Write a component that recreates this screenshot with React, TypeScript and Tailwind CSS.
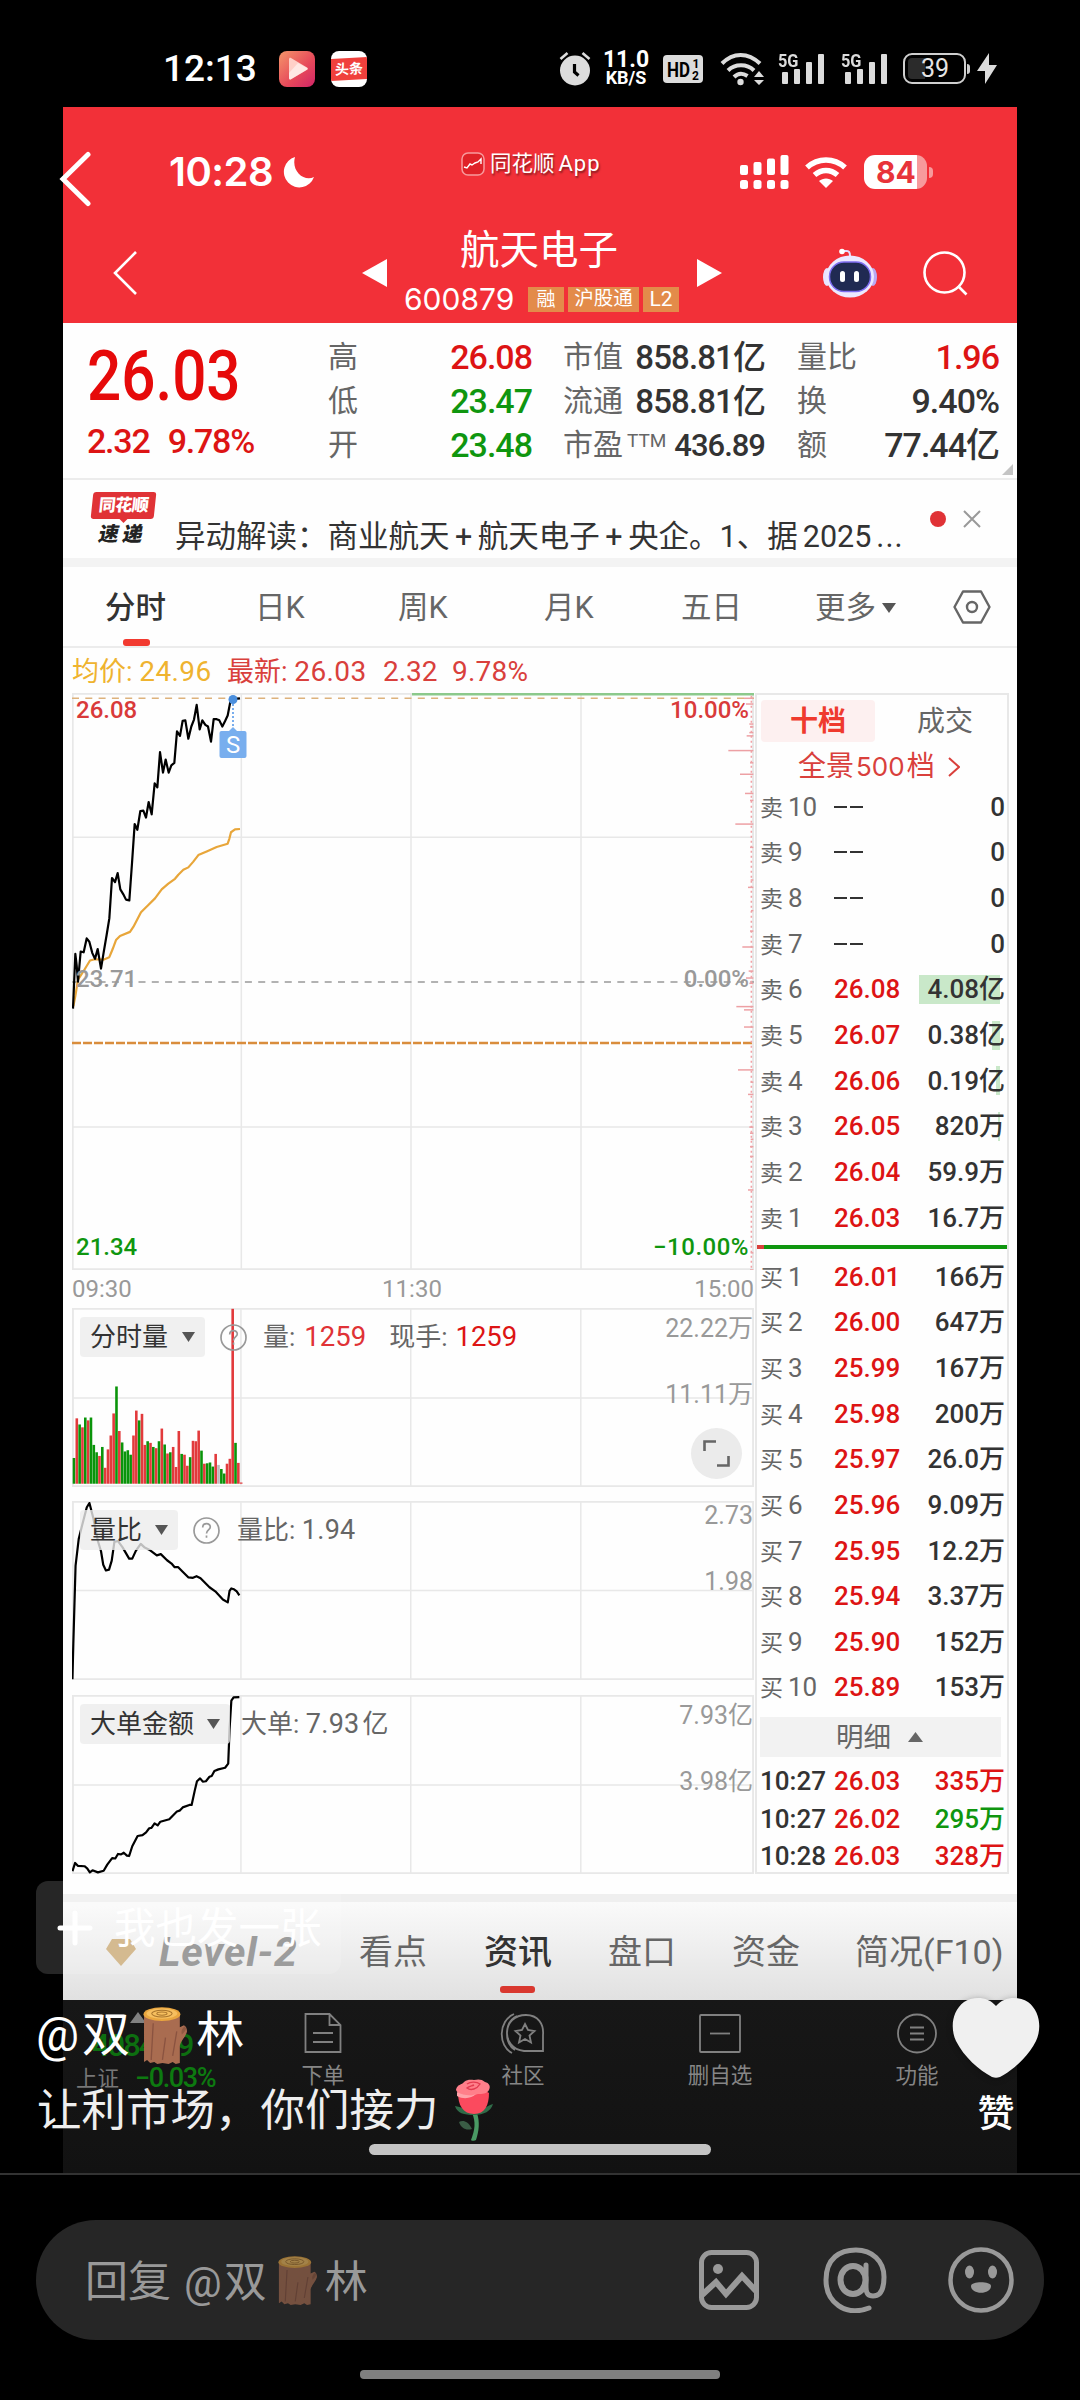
import type { ReactNode } from "react";
import clsx from "clsx";

const GRAY = "text-[#666]";
const RED = "text-[#dd1414]";
const GREEN = "text-[#0f960f]";
const DARK = "text-[#333]";

const PRICE_LINE =
  "39,806 46,672 50,700 54,740 62,666 71,668 80,634 88,642 97,670 105,684 113,660 123,708 131,668 140,625 148,585 156,486 165,496 173,474 181,514 190,526 198,539 208,541 216,450 224,354 232,368 241,322 250,321 258,338 266,300 275,330 284,254 292,264 300,178 309,228 317,196 326,228 334,210 343,204 351,127 360,138 368,101 376,100 385,145 394,115 402,98 410,62 419,122 427,100 436,111 444,115 453,152 461,97 470,97 478,100 487,115 495,102 503,88 512,50 520,48 540,46";

const AVG_LINE =
  "40,800 46,775 54,735 70,715 90,688 105,685 130,686 148,680 158,660 168,638 180,628 210,618 220,606 243,570 265,552 285,536 305,514 325,500 345,488 355,478 370,466 385,460 400,446 415,430 440,421 470,410 503,402 508,390 513,374 525,367 540,366";

const RATIO_LINE =
  "28,1028 30,940 35,750 42,685 50,650 60,608 66,597 75,635 85,690 92,715 97,748 103,762 110,760 116,738 122,692 130,690 140,705 155,733 162,733 170,714 181,697 190,706 200,711 217,725 226,722 240,737 250,745 257,754 265,754 275,765 288,779 298,780 306,776 315,781 335,803 348,813 365,833 376,840 380,812 384,806 390,808 396,813 402,823";

const BIG_ORDER_LINE =
  "28,1497 34,1477 40,1484 55,1485 61,1490 67,1500 73,1495 85,1500 98,1496 106,1481 117,1465 124,1466 130,1455 137,1456 143,1452 150,1459 155,1460 162,1436 174,1411 185,1409 193,1402 200,1392 205,1391 212,1380 219,1385 225,1376 245,1370 262,1351 268,1349 275,1341 290,1335 295,1335 302,1300 307,1277 314,1270 320,1278 327,1277 335,1266 340,1264 346,1252 355,1248 370,1244 377,1234 380,1150 384,1080 389,1072 402,1071";

// one entry per minute: colour + top of the bar
const VOLUME =
  "g485 r388 g403 r410 g386 r393 g386 g453 g471 r480 g458 r509 r464 r430 r376 g310 r419 g447 g469 g466 g477 r430 r369 g393 r377 r453 g444 r448 g458 r461 g444 r413 g452 r474 g471 r458 r507 r419 g475 r477 r504 g483 r443 r444 r418 g467 r499 g498 g496 g506 r475 x502 g512 g523 r499 r487 r120 g448 r497 r545".split(" ");

const BAR_COLORS: Record<string, string> = { g: "#0a940a", r: "#e23a3c", x: "#bbb" };

// [y, length] of the price distribution strokes on the right axis
const TICKS = [
  [70, 30], [84, 24], [133, 14], [140, 12], [154, 14], [162, 22], [198, 77], [228, 12], [256, 42], [303, 27],
  [320, 12], [378, 56], [435, 12], [515, 10], [533, 18], [590, 9], [640, 12], [679, 35], [738, 16], [755, 24],
  [768, 14], [825, 53], [833, 30], [875, 30], [980, 48], [1010, 10], [1040, 18], [1120, 14], [1135, 12],
  [1150, 10], [1168, 12], [1192, 12], [1274, 18], [1428, 10], [1470, 12],
];

const SELLS = [
  ["10", "--", "0"],
  ["9", "--", "0"],
  ["8", "--", "0"],
  ["7", "--", "0"],
  ["6", "26.08", "4.08亿", 81],
  ["5", "26.07", "0.38亿", 8],
  ["4", "26.06", "0.19亿", 4],
  ["3", "26.05", "820万", 2],
  ["2", "26.04", "59.9万"],
  ["1", "26.03", "16.7万"],
] as const;

const BUYS = [
  ["1", "26.01", "166万"],
  ["2", "26.00", "647万"],
  ["3", "25.99", "167万"],
  ["4", "25.98", "200万"],
  ["5", "25.97", "26.0万"],
  ["6", "25.96", "9.09万"],
  ["7", "25.95", "12.2万"],
  ["8", "25.94", "3.37万"],
  ["9", "25.90", "152万"],
  ["10", "25.89", "153万"],
] as const;

const TRADES = [
  ["10:27", "26.03", "335万", RED],
  ["10:27", "26.02", "295万", GREEN],
  ["10:28", "26.03", "328万", RED],
];

function Log({ className }: { className: string }) {
  return (
    <svg viewBox="0 0 43 56" className={className} preserveAspectRatio="none">
      <path d="M1 7v47l3-2 3 3 4-1 3 2 5-1 6 1 4-2 3 2 4-1V38c1-5 6-9 7-14 0-3-1-5-3-6l-4 2V7z" fill="#a96c50" />
      <path d="M10 16l-2 36M22 30l-3 22M29 48l4-24" stroke="#8a5340" strokeWidth="1.3" fill="none" />
      <path d="M41 19c-3 2-4 5-3 8 2-2 4-4 4-6z" fill="#8f5942" />
      <ellipse cx="18.500" cy="7" rx="18" ry="6.800" fill="#e9a63f" />
      <ellipse cx="18.500" cy="6.500" rx="15" ry="5" fill="#f6bf5f" />
      <ellipse cx="18.500" cy="6.500" rx="10" ry="3.300" fill="none" stroke="#a8742c" strokeWidth="1" />
      <ellipse cx="18.500" cy="6.500" rx="5" ry="1.600" fill="none" stroke="#a8742c" strokeWidth="1" />
    </svg>
  );
}

function Rose() {
  return (
    <svg viewBox="0 0 40 62" className="ml-[15px] h-[62px] w-[40px] shrink-0">
      <path d="M18 34c4 9 3 17-1 27 0 1 4 1 5 0 3-9 4-18 1-27z" fill="#4a9a64" />
      <path d="M18 50C14 42 9 41 5 43c2 6 7 9 13 7z" fill="#3a5c45" />
      <path d="M1 27c6 1 11 4 19 7 8-3 13-7 19-9-2 7-9 11-19 11S3 34 1 27z" fill="#2f6b48" />
      <path d="M4 14c0 12 5 21 16 21s15-9 15-21l-8-5-15 1z" fill="#fb4a5e" />
      <path d="M2 11C3 5 8 6 10 3c4-3 7-2 10-2 4-1 8-1 11 2 4 1 6 4 4 8-2 4-7 4-11 4C16 17 6 19 2 11z" fill="#ff7f8a" />
      <path d="M13 5c4-3 10-2 13 0-3 5-9 7-13 4 2-2 5-2 7-3" fill="none" stroke="#e33b50" strokeWidth="1.400" />
      <path d="M3 13c7 4 15 4 19 2-4 4-12 6-19 2z" fill="#ffa3aa" />
    </svg>
  );
}

function MobileBars() {
  return (
    <div className="relative h-[33px] w-[47px] pt-[1px]">
      <span className="block origin-left scale-x-[0.86] text-[19px] leading-[15px] font-bold text-[#dcdcdc]">5G</span>
      <svg viewBox="0 0 47 33" className="absolute inset-0 h-[33px] w-[47px]" fill="#dcdcdc">
        <rect x="4" y="20" width="6" height="12" rx="1" />
        <rect x="16" y="17" width="6" height="15" rx="1" />
        <rect x="28" y="10" width="6" height="22" rx="1" />
        <rect x="40" y="2" width="6" height="30" rx="1" />
      </svg>
    </div>
  );
}

function SystemStatusBar() {
  return (
    <div className="flex h-[107px] shrink-0 items-center pt-[30px] pl-[163px] font-medium text-white">
      <span className="w-[116px] text-[37px] leading-none">12:13</span>
      <svg viewBox="0 0 36 36" className="size-[36px]">
        <defs>
          <linearGradient id="play" x1="0" y1="0" x2="1" y2="1">
            <stop offset="0" stopColor="#f5966a" />
            <stop offset="0.600" stopColor="#e6475a" />
            <stop offset="1" stopColor="#d02568" />
          </linearGradient>
        </defs>
        <rect width="36" height="36" rx="8" fill="url(#play)" />
        <path d="M10 8.500c0-1.500 1-2 2-1.400l16 9.400c1 .7 1 1.700 0 2.300l-16 9.500c-1 .6-2 0-2-1.300z" fill="#ffd0c8" />
        <path d="M10 22l9-10 9 5c1 .7 1 1.200 0 1.800l-16 9.500c-1 .6-2 0-2-1.300z" fill="#fff" opacity=".5" />
      </svg>
      <div className="ml-[16px] flex size-[36px] items-center overflow-hidden rounded-[8px] bg-white">
        <div className="flex h-[22px] w-full -skew-y-3 items-center justify-center bg-[#f0403c] text-[14px] leading-none font-bold">头条</div>
      </div>

      <svg viewBox="0 0 32 34" className="ml-[192px] h-[34px] w-[32px]" fill="#dcdcdc">
        <circle cx="16" cy="18.500" r="15" />
        <path d="M1.500 7l7-6M30.500 7l-7-6" stroke="#dcdcdc" strokeWidth="2.600" />
        <path d="M15.500 12v8l4 3.500" stroke="#000" strokeWidth="3.200" fill="none" />
      </svg>
      <div className="ml-[12px] flex w-[46px] flex-col items-center text-white">
        <span className="text-[23px] leading-[18px] font-bold">11.0</span>
        <span className="text-[18px] leading-[18px] font-bold">KB/S</span>
      </div>
      <svg viewBox="0 0 40 28" className="ml-[14px] h-[28px] w-[40px]">
        <rect width="40" height="28" rx="4" fill="#dcdcdc" />
        <text x="4" y="22" fontSize="20" fontWeight="700" textLength="23" lengthAdjust="spacingAndGlyphs">HD</text>
        <text x="29.500" y="13" fontSize="12" fontWeight="700">1</text>
        <text x="29" y="24.500" fontSize="12" fontWeight="700">2</text>
      </svg>
      <svg viewBox="0 0 45 34" className="ml-[17px] h-[34px] w-[45px]" fill="none" stroke="#dcdcdc" strokeWidth="4">
        <path d="M2 11.500C13 0 28 0 40 11.500M8 18.500c7-7 19-7 26 0M14 25c4-4 9-4 13.500-1" />
        <circle cx="20.500" cy="30" r="3.200" fill="#dcdcdc" stroke="none" />
        <path d="M34 25l5-6 5 6zM34 28h10l-5 5z" fill="#dcdcdc" stroke="none" />
      </svg>
      <div className="ml-[13px] flex gap-[16px]">
        <MobileBars />
        <MobileBars />
      </div>
      <div className="ml-[15px] flex h-[31px] w-[63px] items-center rounded-[9px] border-2 border-[#cfcfcf] p-[3px]">
        <div className="h-full w-[17px] rounded-l-[4px] bg-[#2b2b2b]" />
        <span className="-ml-[4px] text-[25px] leading-none font-normal text-[#e4e4e4]">39</span>
      </div>
      <div className="ml-[1px] h-[10px] w-[3px] rounded-r bg-[#cfcfcf]" />
      <svg viewBox="0 0 20 31" className="ml-[7px] h-[31px] w-[20px]" fill="#dcdcdc">
        <path d="M12 0L0 18h8v13L20 12h-8z" />
      </svg>
    </div>
  );
}

function StockHeader() {
  return (
    <header className="h-[216px] bg-[#f23038] text-white">
      <div className="flex h-[112px] items-center pt-[18px]">
        <div className="flex w-[398px] items-center pl-[106px]">
          <span className="font-['Inter'] text-[40px] leading-none font-semibold tracking-[-0.5px]">10:28</span>
          <svg viewBox="0 0 31 31" className="ml-[10px] size-[31px]" fill="#fff">
            <path d="M12 0A15.500 15.500 0 1 0 31 20C21 25 8 14 12 0z" />
          </svg>
        </div>
        <div className="flex w-[279px] items-center pb-[17px]">
          <svg viewBox="0 0 24 24" className="size-[24px]" fill="none" stroke="#fff">
            <rect x="1" y="1" width="22" height="22" rx="6" stroke="#f79a9c" strokeWidth="1.500" fill="#e02228" />
            <path d="M3 15l3 1 3-4 2 1 3-2 3-1 3-3v5" strokeWidth="1.400" />
          </svg>
          <span className="ml-[5px] text-[21.500px] leading-none [text-shadow:1px_2px_2px_rgba(0,0,0,.45)]">
            同花顺<span className="ml-[4px] text-[22px] tracking-[1px]">App</span>
          </span>
        </div>
        <svg viewBox="0 0 49 34" className="h-[34px] w-[49px]" fill="#fff">
          <rect x="0" y="10" width="8" height="10" rx="2" />
          <rect x="13.500" y="7" width="8" height="13" rx="2" />
          <rect x="27" y="3.500" width="8" height="16.500" rx="2" />
          <rect x="40.500" y="0" width="8" height="20" rx="2" />
          {[0, 13.5, 27, 40.5].map((x) => (
            <rect key={x} x={x} y="25" width="8" height="9" rx="2.500" />
          ))}
        </svg>
        <svg viewBox="0 0 42 31" className="ml-[16px] h-[31px] w-[42px]" fill="none" stroke="#fff" strokeWidth="5.500">
          <path d="M2 10.500c11-10 27-10 38 0M9.500 18c7-6 16-6 23 0" />
          <path d="M14 24c4-3.500 10-3.500 14 0l-7 7z" fill="#fff" stroke="none" />
        </svg>
        <div className="ml-[17px] flex h-[34px] w-[63px] items-center justify-center overflow-hidden rounded-[11px] bg-linear-to-r from-white from-84% to-[#f79a9c] to-84% pl-px font-['Inter'] text-[30px] leading-none font-bold text-[#e8333a]">
          84
        </div>
        <div className="ml-[2px] h-[11px] w-[4px] rounded-r-full bg-[#f79a9c]" />
      </div>

      <div className="flex h-[104px] items-center pt-[4px]">
        <svg viewBox="0 0 24 44" className="ml-[50px] h-[44px] w-[24px]" fill="none" stroke="#fff" strokeWidth="2.600">
          <path d="M23 1L2 22l21 21" />
        </svg>
        <svg viewBox="0 0 25 28" className="ml-[225px] h-[28px] w-[25px]" fill="#fff">
          <path d="M25 0v28L0 14z" />
        </svg>
        <div className="ml-[17px] flex w-[275px] flex-col">
          <h1 className="ml-[56px] text-[39.500px] leading-[52px] font-normal">航天电子</h1>
          <div className="flex h-[44px] items-center gap-[4px]">
            <span className="mr-[8px] w-[112px] font-['Inter'] text-[30px] leading-none">600879</span>
            <span className="flex h-[25px] w-[36px] items-center justify-center bg-[#e38b4a] text-[19px] leading-none">融</span>
            <span className="flex h-[25px] w-[71px] items-center justify-center bg-[#e38b4a] text-[19.500px] leading-none">沪股通</span>
            <span className="flex h-[25px] w-[36px] items-center justify-center bg-[#e38b4a] text-[21px] leading-none">L2</span>
          </div>
        </div>
        <svg viewBox="0 0 25 28" className="ml-[18px] h-[28px] w-[25px]" fill="#fff">
          <path d="M0 0v28l25-14z" />
        </svg>
        <svg viewBox="0 0 54 50" className="ml-[101px] h-[50px] w-[54px]">
          <path d="M19 3l5 0c2 0 3 2 3 5" stroke="#e6dcff" strokeWidth="2" fill="none" />
          <circle cx="19" cy="3.500" r="2.800" fill="#fff" />
          <ellipse cx="4" cy="29" rx="4" ry="9" fill="#e9e4ff" />
          <ellipse cx="50" cy="29" rx="4" ry="9" fill="#b9a9f4" />
          <ellipse cx="27" cy="28.500" rx="24" ry="21" fill="#ece8ff" />
          <rect x="6.500" y="14" width="41" height="29.500" rx="14.500" fill="#202a52" stroke="#7d6cf0" strokeWidth="1.500" />
          <rect x="17" y="23" width="5" height="11" rx="2.500" fill="#fff" />
          <rect x="31" y="23" width="5" height="11" rx="2.500" fill="#fff" />
        </svg>
        <svg viewBox="0 0 45 45" className="ml-[46px] size-[45px]" fill="none" stroke="#fff" strokeWidth="2.600">
          <circle cx="21.500" cy="21.500" r="20" />
          <path d="M35 35l8.500 8.500" />
        </svg>
      </div>
    </header>
  );
}

function QuoteRow({ label, value, tone = DARK, size = "text-[34px] tracking-[-1px]" }: { label: ReactNode; value: string; tone?: string; size?: string }) {
  return (
    <div className="flex h-[44px] items-center justify-between leading-none">
      <span className={clsx("text-[30px]", GRAY)}>{label}</span>
      <span className={clsx("font-medium", size, tone)}>{value}</span>
    </div>
  );
}

function Quote() {
  return (
    <section className="relative flex h-[157px] border-b-2 border-[#ececec] pt-[12px]">
      <div className="w-[265px] pl-[24px] text-[#e60a0a]">
        <div className="origin-left scale-x-[0.86] pt-[6px] text-[70px] leading-none font-medium">26.03</div>
        <div className="flex gap-[18px] pt-[13px] text-[34px] leading-none font-medium tracking-[-1.200px] text-[#dd1414]">
          <span>2.32</span>
          <span>9.78%</span>
        </div>
      </div>
      <div className="w-[204px]">
        <QuoteRow label="高" value="26.08" tone={RED} />
        <QuoteRow label="低" value="23.47" tone={GREEN} />
        <QuoteRow label="开" value="23.48" tone={GREEN} />
      </div>
      <div className="ml-[31px] w-[202px]">
        <QuoteRow label="市值" value="858.81亿" size="text-[33px] tracking-[-0.900px]" />
        <QuoteRow label="流通" value="858.81亿" size="text-[33px] tracking-[-0.900px]" />
        <QuoteRow
          label={
            <>
              市盈<sup className="top-[-8px] ml-[4px] text-[19px] leading-none">TTM</sup>
            </>
          }
          value="436.89"
          size="text-[31px] tracking-[-1px]"
        />
      </div>
      <div className="ml-[32px] w-[202px]">
        <QuoteRow label="量比" value="1.96" tone={RED} />
        <QuoteRow label="换" value="9.40%" />
        <QuoteRow label="额" value="77.44亿" />
      </div>
      <svg viewBox="0 0 11 11" className="absolute right-[4px] bottom-[3px] size-[11px]">
        <path d="M11 0v11H0z" fill="#c4c4c4" />
      </svg>
    </section>
  );
}

function NewsStrip() {
  return (
    <section className="flex h-[87px] border-b-[9px] border-[#f3f3f3]">
      <div className="ml-[27px] flex w-[66px] flex-col items-center pt-[12px]">
        <div className="flex h-[27px] w-[63px] -skew-x-6 items-center justify-center rounded-[3px] bg-[#e03236] text-[17px] leading-none font-black tracking-[-0.500px] text-white">
          同花顺
        </div>
        <svg viewBox="0 0 10 5" className="h-[4px] w-[9px]">
          <path d="M0 0h10L5 5z" fill="#e03236" />
        </svg>
        <span className="-skew-x-12 text-[20px] leading-[22px] font-black tracking-[4px] text-[#222]">速递</span>
      </div>
      <p className="ml-[19px] w-[734px] pt-[42px] text-[30.500px] leading-none whitespace-nowrap text-[#333]">
        异动解读：商业航天<span className="mx-[5.500px]">+</span>航天电子<span className="mx-[5.500px]">+</span>央企。1、据<span className="ml-[5px]">2025</span>
        <span className="ml-[5px] tracking-[1px]">...</span>
      </p>
      <div className="mt-[31px] ml-[21px] size-[16px] rounded-full bg-[#e03236]" />
      <svg viewBox="0 0 18 18" className="mt-[30px] ml-[17px] size-[18px]" stroke="#999" strokeWidth="2">
        <path d="M1 1l16 16M17 1L1 17" />
      </svg>
    </section>
  );
}

function PeriodTabs() {
  return (
    <nav className={clsx("flex h-[81px] items-center border-b-2 border-[#ececec] pt-[3px] text-[30.500px] leading-none", GRAY)}>
      <div className="relative ml-[42px] w-[150px] font-medium text-[#333]">
        分时
        <div className="absolute -bottom-[23px] left-[18px] h-[7px] w-[27px] rounded-[3px] bg-[#f23a30]" />
      </div>
      <span className="w-[143px]">日K</span>
      <span className="w-[146px]">周K</span>
      <span className="w-[137px]">月K</span>
      <span className="w-[134px]">五日</span>
      <span>更多</span>
      <svg viewBox="0 0 14 10" className="ml-[6px] h-[10px] w-[14px]">
        <path d="M0 0h14L7 10z" fill="#555" />
      </svg>
      <svg viewBox="0 0 38 34" className="-mt-[2px] ml-[57px] h-[34px] w-[38px]" fill="none" stroke="#666" strokeWidth="2.400">
        <path d="M10 1.500h18L36.500 17 28 32.500H10L1.500 17z" strokeLinejoin="round" />
        <circle cx="19" cy="17" r="5" />
      </svg>
    </nav>
  );
}

function Stroke({ points, color = "#000" }: { points: string; color?: string }) {
  return <polyline points={points} fill="none" stroke={color} strokeWidth="2.200" strokeLinejoin="round" vectorEffect="non-scaling-stroke" />;
}

function PriceChart() {
  return (
    <div className="relative h-[577px] text-[24px] leading-none font-medium">
      <svg viewBox="36 33 2046 1413" preserveAspectRatio="none" className="absolute inset-0 size-full">
        <g fill="none" stroke="#e8e8e8" strokeWidth="1.500">
          <path d="M36 386H2082M36 1096H2082M544 33V1446M1053 33V1446M1563 33V1446" vectorEffect="non-scaling-stroke" />
          <rect x="38" y="35" width="2041" height="1409" strokeWidth="2" vectorEffect="non-scaling-stroke" />
        </g>
        <path d="M36 46H2082" stroke="#ddb27c" strokeWidth="1.500" strokeDasharray="7 6.300" vectorEffect="non-scaling-stroke" />
        <path d="M36 741H2082" stroke="#999" strokeWidth="1.500" strokeDasharray="7 6.300" vectorEffect="non-scaling-stroke" />
        <path d="M36 890H2082" stroke="#d98d3c" strokeWidth="2.500" strokeDasharray="9 2" vectorEffect="non-scaling-stroke" />
        <path d="M1056 36H2082" stroke="#8cc98c" strokeWidth="2.500" vectorEffect="non-scaling-stroke" />
        <path d="M2074 40V1446" stroke="#f2a0a4" strokeWidth="1.500" strokeDasharray="2 3" vectorEffect="non-scaling-stroke" />
        {TICKS.map(([y, len]) => (
          <path key={y} d={`M${2082 - len} ${y - 24}H2080`} stroke="#eda0a4" strokeWidth="1.500" vectorEffect="non-scaling-stroke" />
        ))}
        <Stroke points={AVG_LINE} color="#e8a63a" />
        <Stroke points={PRICE_LINE} />
      </svg>
      <svg viewBox="0 0 28 66" className="absolute top-[1px] left-[147px] h-[66px] w-[28px]">
        <circle cx="14" cy="5.500" r="4.500" fill="#4b8fdd" />
        <path d="M14 10v22" stroke="#6ba5ec" strokeWidth="1.800" strokeDasharray="2 2" />
        <path d="M10 37l4-4 4 4z" fill="#78aeee" />
        <rect x="0.500" y="37" width="27" height="27" rx="2" fill="#78aeee" />
        <text x="14" y="59" textAnchor="middle" fontSize="24" fontWeight="400" fill="#fff">S</text>
      </svg>
      <div className="relative flex h-full flex-col justify-between pt-[5px] pr-[5px] pb-[11px] pl-[4px]">
        <div className="flex justify-between text-[#d93a3a]">
          <span>26.08</span>
          <span>10.00%</span>
        </div>
        <div className="flex justify-between text-[#999]">
          <span>23.71</span>
          <span>0.00%</span>
        </div>
        <div className={clsx("flex justify-between", GREEN)}>
          <span>21.34</span>
          <span className="tracking-[0.500px]">−10.00%</span>
        </div>
      </div>
    </div>
  );
}

function PickerButton({ children, width }: { children: ReactNode; width: string }) {
  return (
    <div className={clsx("flex h-[40px] shrink-0 items-center justify-between rounded-[4px] bg-[#ececec]/80 pr-[10px] pl-[10px] text-[26px] text-[#333]", width)}>
      {children}
      <svg viewBox="0 0 13 10" className="h-[10px] w-[13px]">
        <path d="M0 0h13L6.500 10z" fill="#555" />
      </svg>
    </div>
  );
}

function HelpIcon() {
  return (
    <svg viewBox="0 0 27 27" className="ml-[15px] size-[27px] shrink-0" fill="none" stroke="#999" strokeWidth="1.700">
      <circle cx="13.500" cy="13.500" r="12.500" />
      <path d="M9.700 10.500c0-5 7.600-5 7.600-.5 0 3-3.800 3-3.800 6.500M13.500 18.500v2.300" />
    </svg>
  );
}

function SubChart({
  viewBox,
  mid,
  scale,
  scaleClass = "pt-[8px]",
  labels,
  children,
  className,
}: {
  viewBox: string;
  mid: number;
  scale: [string, string];
  scaleClass?: string;
  labels: ReactNode;
  children: ReactNode;
  className?: string;
}) {
  const [x, y, w, h] = viewBox.split(" ").map(Number);
  return (
    <div className={clsx("relative h-[179px] leading-none", className)}>
      <svg viewBox={viewBox} preserveAspectRatio="none" className="absolute inset-0 size-full">
        <rect x={x + 2} y={y + 2} width={w - 4} height={h - 4} fill="none" stroke="#e8e8e8" strokeWidth="2" vectorEffect="non-scaling-stroke" />
        <path
          d={`M${x} ${mid}h${w}M405.500 ${y}v${h}M786 ${y}v${h}M1167 ${y}v${h}`}
          stroke="#e8e8e8"
          strokeWidth="1.500"
          vectorEffect="non-scaling-stroke"
        />
        {children}
      </svg>
      <div className={clsx("relative flex items-center pt-[9px] pl-[8px] text-[26px]", GRAY)}>{labels}</div>
      <div className={clsx("absolute top-0 right-px flex flex-col items-end text-[25px] text-[#999]", scaleClass)}>
        <span>{scale[0]}</span>
        <span className="mt-[41px]">{scale[1]}</span>
      </div>
    </div>
  );
}

function Charts() {
  return (
    <div className="w-[682px]">
      <PriceChart />
      <div className="flex h-[38px] items-center justify-between text-[24px] leading-none text-[#999]">
        <span>09:30</span>
        <span className="pr-[2px]">11:30</span>
        <span>15:00</span>
      </div>
      <div className="relative">
        <SubChart
          viewBox="27 118 1528 438"
          mid={338}
          scale={["22.22万", "11.11万"]}
          labels={
            <>
              <PickerButton width="w-[125px]">分时量</PickerButton>
              <HelpIcon />
              <span className="ml-[16px]">量:</span>
              <span className="ml-[9px] text-[27.500px] text-[#e03236]">1259</span>
              <span className="ml-[23px]">现手:</span>
              <span className="ml-[8px] text-[27.500px] text-[#dd1414]">1259</span>
            </>
          }
        >
          {VOLUME.map((bar, i) => (
            <rect key={i} x={28.5 + i * 6.35} y={bar.slice(1)} width="5.800" height={548 - Number(bar.slice(1))} fill={BAR_COLORS[bar[0]]} />
          ))}
        </SubChart>
        <div className="absolute right-[12px] bottom-[8px] flex size-[51px] items-center justify-center rounded-full bg-[#ebebeb]">
          <svg viewBox="0 0 27 27" className="size-[27px]" fill="none" stroke="#666" strokeWidth="2.600">
            <path d="M1.500 11V1.500H13M25.500 16v9.500H14" />
          </svg>
        </div>
      </div>
      <SubChart
        className="mt-[14px]"
        viewBox="27 592 1528 438"
        mid={811}
        scale={["2.73", "1.98"]}
        scaleClass="pt-[2px]"
        labels={
          <>
            <PickerButton width="w-[98px]">量比</PickerButton>
            <HelpIcon />
            <span className="ml-[17px]">
              量比: <span className="text-[27px] tracking-[0.300px]">1.94</span>
            </span>
          </>
        }
      >
        <Stroke points={RATIO_LINE} />
      </SubChart>
      <SubChart
        className="mt-[15px]"
        viewBox="27 1066 1528 438"
        mid={1286}
        scale={["7.93亿", "3.98亿"]}
        labels={
          <>
            <PickerButton width="w-[150px]">大单金额</PickerButton>
            <span className="ml-[11px]">
              大单: <span className="mr-[3px] text-[27px] tracking-[0.300px]">7.93</span>亿
            </span>
          </>
        }
      >
        <Stroke points={BIG_ORDER_LINE} />
      </SubChart>
    </div>
  );
}

function BookRow({ side, level, price, amount, bar }: { side: string; level: string; price: string; amount: string; bar?: number }) {
  const empty = price === "--";
  return (
    <div className="relative flex h-[45.650px] items-center text-[26px] leading-none">
      {bar ? <div className="absolute right-[1px] h-[29px] bg-[#c9e8c9]" style={{ width: bar }} /> : null}
      <span className={clsx("relative w-[74px]", GRAY)}>
        <span className="mr-[5px] text-[23px]">{side}</span>
        {level}
      </span>
      {empty ? (
        <span className="flex gap-[3px]">
          <i className="h-[2px] w-[13px] bg-[#333]" />
          <i className="h-[2px] w-[13px] bg-[#333]" />
        </span>
      ) : (
        <span className={clsx("font-medium", RED)}>{price}</span>
      )}
      <span className="relative -mr-[4px] ml-auto font-medium text-[#333]">{amount}</span>
    </div>
  );
}

function OrderBook() {
  return (
    <div className="ml-px h-[1181px] w-[254px] border-2 border-[#e8e8e8]">
      <div className="mt-[5px] ml-[4px] flex h-[42px] items-center text-[28px] leading-none">
        <span className="flex h-full w-[114px] items-center justify-center rounded-[4px] bg-[#fdf0f0] pt-[2px] font-bold text-[#ef3a2e]">十档</span>
        <span className={clsx("ml-[42px] pt-[2px]", GRAY)}>成交</span>
      </div>
      <div className="flex h-[42px] items-center pt-[7px] pl-[41px] text-[28px] leading-none text-[#d9403c]">
        全景<span className="px-[2px] font-['Inter'] text-[26px]">500</span>档
        <svg viewBox="0 0 12 20" className="ml-[13px] h-[20px] w-[12px]" fill="none" stroke="#d9403c" strokeWidth="2">
          <path d="M1 1l10 9-10 9" />
        </svg>
      </div>
      <div className="pr-[6px] pl-[3px]">
        {SELLS.map(([level, price, amount, bar]) => (
          <BookRow key={level} side="卖" level={level} price={price} amount={amount} bar={bar} />
        ))}
      </div>
      <div className="my-[4.500px] h-[4.500px] border-l-[7px] border-[#d9403c] border-l-[#d9403c] bg-[#0f960f]" />
      <div className="pr-[6px] pl-[3px]">
        {BUYS.map(([level, price, amount]) => (
          <BookRow key={level} side="买" level={level} price={price} amount={amount} />
        ))}
        <div className={clsx("mt-[7px] mb-[5px] flex h-[40px] items-center bg-[#f2f2f2] pl-[76px] text-[27.500px] leading-none", GRAY)}>
          明细
          <svg viewBox="0 0 15 10" className="ml-[17px] h-[10px] w-[15px]">
            <path d="M0 10h15L7.500 0z" fill="#666" />
          </svg>
        </div>
        {TRADES.map(([time, price, amount, tone], i) => (
          <div key={i} className="flex h-[37.600px] items-center text-[26px] leading-none font-medium">
            <span className="w-[74px] text-[#333]">{time}</span>
            <span className={RED}>{price}</span>
            <span className={clsx("-mr-[4px] ml-auto", tone)}>{amount}</span>
          </div>
        ))}
      </div>
    </div>
  );
}

function InfoTabs() {
  return (
    <nav className={clsx("flex h-[98px] items-center bg-linear-to-b from-[#fafafa] to-[#e1e1e1] pt-[2px] text-[34px] leading-none *:shrink-0", GRAY)}>
      <svg viewBox="0 0 30 27" className="ml-[43px] h-[27px] w-[30px]">
        <path d="M6 0h18l6 10-15 17L0 10z" fill="#cdae7d" />
      </svg>
      <span className="ml-[23px] w-[200px] text-[41px] font-bold tracking-[0.800px] text-[#8b8b8b] italic">Level-2</span>
      <span className="w-[125px]">看点</span>
      <div className="relative w-[124px] font-medium text-[#333]">
        资讯
        <div className="absolute -bottom-[24px] left-[16px] h-[7px] w-[35px] rounded-[3px] bg-[#d9382f]" />
      </div>
      <span className="w-[124px]">盘口</span>
      <span className="w-[123px]">资金</span>
      <span className="whitespace-nowrap">简况(F10)</span>
    </nav>
  );
}

function NavItem({ label, className, children }: { label: string; className: string; children: ReactNode }) {
  return (
    <div className={clsx("flex flex-col items-center pt-[12px]", className)}>
      <svg viewBox="0 0 46 42" className="h-[42px] w-[46px]" fill="none" stroke="#808080" strokeWidth="1.800">
        {children}
      </svg>
      <span className="mt-[11px] text-[21.500px] leading-none text-[#868686]">{label}</span>
    </div>
  );
}

function BottomNav() {
  return (
    <div className="relative flex h-[173px] bg-linear-to-b from-[#171717] to-[#121212]">
      <div className="w-[214px] pt-[12px] pl-[13px] leading-none">
        <svg viewBox="0 0 16 11" className="ml-[54px] h-[11px] w-[16px]">
          <path d="M0 11h16L8 0z" fill="#808080" />
        </svg>
        <div className="mt-[7px] ml-[16px] text-[31px] font-medium tracking-[-2px] text-[#0d6e10]">4084.69</div>
        <div className="mt-[4px] flex items-center text-[21.500px] text-[#777]">
          上证
          <span className="ml-[16px] text-[27px] font-medium tracking-[-1.400px] text-[#0d7a10]">−0.03%</span>
        </div>
      </div>
      <NavItem label="下单" className="w-[92px]">
        <path d="M5.500 2h24l11 11v27h-35zM29.500 2v11h11M13 21h20M13 30h20" />
      </NavItem>
      <NavItem label="社区" className="ml-[107px] w-[94px]">
        <path d="M14 2C-2 9-2 34 12 41M17 4C4 10 4 31 15 38M43 39H24C0 36 2 3 26 3c12 0 18 9 17 20z" />
        <path d="M25 12l3 6 6.500 1-5 4.500 1.500 7-6-3.500-6 3.500 1.500-7-5-4.500 6.500-1z" />
      </NavItem>
      <NavItem label="删自选" className="ml-[97px] w-[106px]">
        <rect x="3" y="3" width="40" height="37" rx="1" />
        <path d="M13 21.500h20" />
      </NavItem>
      <NavItem label="功能" className="ml-[91px] w-[106px]">
        <circle cx="23" cy="21.500" r="19" />
        <path d="M16 15.500h14M16 21.500h14M16 27.500h14" />
      </NavItem>
      <div className="absolute bottom-[18px] left-[306px] h-[11px] w-[342px] rounded-full bg-[#c4c4c4]" />
    </div>
  );
}

function CommentBar() {
  return (
    <div className="flex flex-1 flex-col items-center border-t-2 border-[#333] pt-[45px]">
      <div className="flex h-[120px] w-[1008px] items-center rounded-full bg-[#262626] pr-[30px] pl-[49px] text-[43px] leading-none text-[#999]">
        <span className="pt-[5px]">
          回复<span className="mr-[2px] ml-[13px] text-[42px]">@</span>双
        </span>
        <Log className="ml-[11px] h-[49px] w-[39px] opacity-60" />
        <span className="ml-[8px] pt-[5px]">林</span>
        <svg viewBox="0 0 60 60" className="ml-auto size-[60px]" fill="none" stroke="#999" strokeWidth="5">
          <rect x="2.500" y="2.500" width="55" height="55" rx="10" />
          <circle cx="19" cy="19" r="5" fill="#999" stroke="none" />
          <path d="M3 45l14-13 10 12 16-18 14 15" strokeWidth="6" />
        </svg>
        <svg viewBox="0 0 64 66" className="ml-[64px] h-[66px] w-[64px]" fill="none" stroke="#999" strokeWidth="5">
          <path d="M46 61C22 70 3 55 3 33S17 3 33 3s28 11 28 27c0 11-3 19-11 19-6 0-7-4-7-9V18" strokeLinecap="round" />
          <ellipse cx="30" cy="33" rx="12.500" ry="14" strokeWidth="6" />
        </svg>
        <svg viewBox="0 0 66 66" className="ml-[61px] size-[66px]" fill="none" stroke="#999" strokeWidth="4.500">
          <circle cx="33" cy="33" r="30.500" />
          <ellipse cx="21.500" cy="25" rx="4.500" ry="6.500" fill="#999" stroke="none" />
          <ellipse cx="44.500" cy="25" rx="4.500" ry="6.500" fill="#999" stroke="none" />
          <path d="M23 39c0-5 20-5 20 0 0 9-20 9-20 0z" fill="#999" stroke="none" />
        </svg>
      </div>
      <div className="mt-[30px] h-[9px] w-[360px] rounded-[4px] bg-[#808080]" />
    </div>
  );
}

function ViewerOverlay() {
  return (
    <>
      <svg viewBox="0 0 32 56" className="absolute top-[151px] left-[59px] h-[56px] w-[32px]" fill="none" stroke="#fff" strokeWidth="5" strokeLinecap="round">
        <path d="M29 3.500L4 28l25 24.500" />
      </svg>
      <div className="absolute top-[1881px] left-[36px] flex h-[93px] w-[305px] items-center rounded-[12px] bg-white/15 pl-[21px] text-[41.500px] leading-none text-white">
        <svg viewBox="0 0 36 36" className="size-[36px]" stroke="#fff" strokeWidth="5" strokeLinecap="round">
          <path d="M3 18h30M18 3v30" />
        </svg>
        <span className="ml-[21px] pt-[3px]">我也发一张</span>
      </div>
      <div className="absolute top-[2001px] left-[36px] text-white">
        <div className="flex h-[68px] items-center text-[48px] leading-none">
          <span className="mr-[3px]">@</span>双
          <Log className="ml-[13px] h-[57px] w-[44px]" />
          <span className="ml-[9px]">林</span>
        </div>
        <div className="flex h-[82px] items-center pl-px text-[44.500px] leading-none whitespace-nowrap text-[#eee]">
          <span className="pt-[3px]">
            让利市场<span className="mr-[1px]">，</span>你们接力
          </span>
          <Rose />
        </div>
      </div>
      <div className="absolute top-[1996px] left-[951px] flex w-[90px] flex-col items-center text-white">
        <svg viewBox="0 0 90 84" className="h-[84px] w-[90px] drop-shadow-[0_1px_3px_rgba(0,0,0,.3)]">
          <path d="M45 10C37 0 22 0 13 6 1 15-1 32 5 45c8 16 23 29 36 36 3 1 5 1 8 0 13-7 28-20 36-36 6-13 4-30-8-39C68 0 53 0 45 10z" fill="#f0f0f0" />
        </svg>
        <span className="mt-[16px] text-[37px] leading-none font-medium">赞</span>
      </div>
    </>
  );
}

export default function App() {
  return (
    <div className="relative flex h-[2400px] w-[1080px] flex-col overflow-hidden bg-black font-['Roboto','Noto_Sans_CJK_SC',sans-serif]">
      <SystemStatusBar />
      <main className="mx-[63px] h-[2066px] shrink-0 bg-[#fefefe]">
        <StockHeader />
        <Quote />
        <NewsStrip />
        <PeriodTabs />
        <div className="flex h-[45px] items-center pt-[2px] pl-[9px] text-[27px] leading-none text-[#d9403c]">
          <span className="w-[155px] text-[#efb32f]">
            均价: <span className="text-[28px] tracking-[0.400px]">24.96</span>
          </span>
          <span className="w-[156px]">
            最新: <span className="text-[28px] tracking-[0.400px]">26.03</span>
          </span>
          <span className="w-[69px] text-[28px]">2.32</span>
          <span className="text-[28px] tracking-[0.200px]">9.78%</span>
        </div>
        <div className="flex pl-[9px]">
          <Charts />
          <OrderBook />
        </div>
        <div className="h-[28px] border-b-[8px] border-[#efefef]" />
        <InfoTabs />
        <BottomNav />
      </main>
      <CommentBar />
      <ViewerOverlay />
    </div>
  );
}
